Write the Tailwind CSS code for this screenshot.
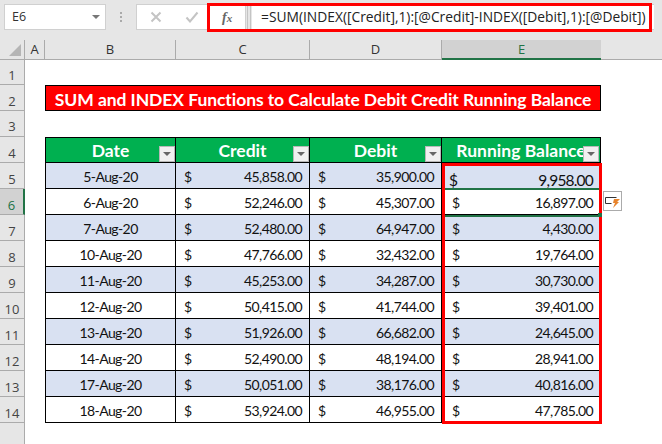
<!DOCTYPE html>
<html lang="en">
<head>
<meta charset="UTF-8">
<title>Running Balance</title>
<script src="https://cdn.jsdelivr.net/npm/@tailwindcss/browser@4"></script>
</head>
<body class="bg-white">
<div class="relative w-[662px] h-[444px] overflow-hidden bg-white font-['Lato',sans-serif] text-[14px] tracking-[-0.6px] text-[#111]">

  <!-- formula bar -->
  <div class="h-[40px] bg-[#e6e6e6] flex items-start pt-[4px] pl-[4px] font-['Open_Sans',sans-serif] tracking-normal">
    <div class="w-[102px] h-[26px] bg-white border border-[#d0d0d0] flex items-center justify-between pl-[7px] pr-[5px] text-[12.5px] text-[#333]">
      E6
      <span class="w-0 h-0 border-x-[4px] border-x-transparent border-t-[4px] border-t-[#777]"></span>
    </div>
    <div class="w-[30px] h-[26px] flex flex-col items-center justify-center gap-[2px]">
      <span class="w-[2px] h-[2px] bg-[#aaa]"></span><span class="w-[2px] h-[2px] bg-[#aaa]"></span><span class="w-[2px] h-[2px] bg-[#aaa]"></span>
    </div>
    <div class="w-[110px] h-[26px] bg-white border border-[#d0d0d0] flex items-center pl-[13px] gap-[23px]">
      <svg width="12" height="12" viewBox="0 0 12 12"><path d="M1.5 1.5l9 9M10.5 1.5l-9 9" stroke="#c4c4c4" stroke-width="2" fill="none"/></svg>
      <svg width="14" height="12" viewBox="0 0 14 12"><path d="M1.5 6.5l3.5 4 7.5-9" stroke="#c4c4c4" stroke-width="2" fill="none"/></svg>
      <span class="font-['Liberation_Serif',serif] italic font-bold text-[14px] text-[#666]">f<span class="text-[11px]">x</span></span>
    </div>
    <div class="w-[4px] h-[26px] ml-[1px] border-x border-[#c4c4c4]"></div>
    <div class="h-[26px] bg-white border-y border-[#d0d0d0] flex-1 flex items-center pl-[9px] text-[13.8px] text-[#222] whitespace-nowrap ml-[1px]">=SUM(INDEX([Credit],1):[@Credit]-INDEX([Debit],1):[@Debit])</div>
    <div class="w-[8px]"></div>
  </div>

  <!-- column headers -->
  <div class="h-[20px] bg-[#e6e6e6] flex border-b border-[#ababab] text-[13px] tracking-normal text-[#333] font-['Open_Sans',sans-serif]">
    <div class="w-[25px] border-r border-[#ababab] flex items-end justify-end pr-[3px] pb-[3px]">
      <span class="w-0 h-0 border-l-[12px] border-l-transparent border-b-[12px] border-b-[#b5b5b5]"></span>
    </div>
    <div class="w-[20px] border-r border-[#ababab] text-center leading-[19px]">A</div>
    <div class="w-[131px] border-r border-[#ababab] text-center leading-[19px]">B</div>
    <div class="w-[134px] border-r border-[#ababab] text-center leading-[19px]">C</div>
    <div class="w-[132px] border-r border-[#ababab] text-center leading-[19px]">D</div>
    <div class="w-[159px] h-[20px] bg-[#d2d2d2] border-b-2 border-[#217346] text-center leading-[19px] text-[#217346]">E</div>
  </div>

  <!-- sheet -->
  <div id="sheet" class="flex flex-col">
    <div class="flex h-[25px]">
      <div class="w-[25px] bg-[#e6e6e6] border-r border-b border-[#ababab] text-[13px] tracking-normal text-[#444] font-['Open_Sans',sans-serif] text-center leading-[30px]">1</div>
    </div>
    <div class="flex h-[26px]">
      <div class="w-[25px] bg-[#e6e6e6] border-r border-b border-[#ababab] text-[13px] tracking-normal text-[#444] font-['Open_Sans',sans-serif] text-center leading-[32px]">2</div>
      <div class="w-[20px]"></div>
      <div class="w-[556px] bg-[#ff0000] border border-black text-white font-bold text-[17.5px] tracking-[-0.07px] text-center leading-[27px] whitespace-nowrap">SUM and INDEX Functions to Calculate Debit Credit Running Balance</div>
    </div>
    <div class="flex h-[26px]">
      <div class="w-[25px] bg-[#e6e6e6] border-r border-b border-[#ababab] text-[13px] tracking-normal text-[#444] font-['Open_Sans',sans-serif] text-center leading-[30px]">3</div>
    </div>
    <div class="flex h-[26px]">
      <div class="w-[25px] bg-[#e6e6e6] border-r border-b border-[#ababab] text-[13px] tracking-normal text-[#444] font-['Open_Sans',sans-serif] text-center leading-[32px]">4</div>
      <div class="w-[20px]"></div>
      <div class="flex h-[26px] border-y border-black bg-[#00b050] text-white font-bold text-[17.5px] tracking-normal leading-[25px]">
        <div class="relative w-[131px] border-x border-black text-center">Date<span class="filter absolute right-0 bottom-0"></span></div>
        <div class="relative w-[134px] border-r border-black text-center">Credit<span class="filter absolute right-0 bottom-0"></span></div>
        <div class="relative w-[132px] border-r border-black text-center">Debit<span class="filter absolute right-0 bottom-0"></span></div>
        <div class="relative w-[159px] border-r border-black text-center whitespace-nowrap">Running Balance<span class="filter absolute right-[1px] bottom-0"></span></div>
      </div>
    </div>
  </div>
  <div class="absolute left-0 top-[423px] w-[25px] h-[21px] bg-[#e6e6e6] border-r border-[#ababab]"></div>

  <!-- selection outline on E5:E14 and formula bar highlight -->
  <div class="absolute left-[442px] top-[163px] w-[160px] h-[261px] border-[3px] border-[#ff0000]"></div>
  <div class="absolute left-[207px] top-[3px] w-[445px] h-[29px] border-[3px] border-[#ff0000]"></div>
  <div class="absolute left-[445px] top-[188px] w-[154px] h-[2px] bg-[#217346]"></div>
  <div class="absolute left-[445px] top-[215px] w-[153px] h-[2px] bg-[#217346]"></div>
  <div class="absolute left-[598px] top-[213px] w-[4px] h-[4px] bg-[#217346]"></div>

  <!-- quick analysis -->
  <div class="absolute left-[603px] top-[191px] w-[19px] h-[20px] bg-white border border-[#ababab]">
    <svg width="17" height="18" viewBox="0 0 17 18">
      <path d="M1.5 5.5h11M1.5 5.5v6h6" stroke="#333" stroke-width="1" fill="none"/>
      <path d="M10 7h6l-3 3h2l-6 6 2-5H9z" fill="#e8842c"/>
    </svg>
  </div>
</div>

<script>
  const data = [
    ['5-Aug-20', '45,858.00', '35,900.00', '9,958.00'],
    ['6-Aug-20', '52,246.00', '45,307.00', '16,897.00'],
    ['7-Aug-20', '52,480.00', '64,947.00', '4,430.00'],
    ['10-Aug-20', '47,766.00', '32,432.00', '19,764.00'],
    ['11-Aug-20', '45,253.00', '34,287.00', '30,730.00'],
    ['12-Aug-20', '50,415.00', '41,744.00', '39,401.00'],
    ['13-Aug-20', '51,926.00', '66,682.00', '24,645.00'],
    ['14-Aug-20', '52,490.00', '48,194.00', '28,941.00'],
    ['17-Aug-20', '50,051.00', '38,176.00', '40,816.00'],
    ['18-Aug-20', '53,924.00', '46,955.00', '47,785.00']
  ];

  // Rows 5 to 14
  const sheet = document.getElementById('sheet');
  data.forEach((r, i) => {
    const selected = i === 1;
    const head = selected
      ? 'bg-[#d2d2d2] text-[#217346] border-r-2 border-r-[#217346]'
      : 'bg-[#e6e6e6] text-[#444] border-r border-r-[#ababab]';
    const fill = i % 2 === 0 ? 'bg-[#d9e1f2]' : 'bg-white';
    const first = i === 0 ? 'text-[15.5px] tracking-[-0.8px] leading-[35px] pl-[7px]' : 'pl-[10px]';
    const row = document.createElement('div');
    row.className = 'flex h-[26px]';
    row.innerHTML = `
      <div class="w-[25px] ${head} border-b border-b-[#ababab] text-[13px] tracking-normal font-['Open_Sans',sans-serif] text-center leading-[32px]">${i + 5}</div>
      <div class="w-[20px]"></div>
      <div class="flex ${fill} border-b border-black leading-[27px]">
        <div class="w-[131px] border-x border-black text-center">${r[0]}</div>
        <div class="w-[134px] border-r border-black flex justify-between pl-[8px] pr-[7px]"><span>$</span><span>${r[1]}</span></div>
        <div class="w-[132px] border-r border-black flex justify-between pl-[8px] pr-[7px]"><span>$</span><span>${r[2]}</span></div>
        <div class="w-[159px] border-r border-black flex justify-between pr-[7px] ${first}"><span>$</span><span>${r[3]}</span></div>
      </div>`;
    sheet.appendChild(row);
  });

  // Filter buttons on the table header
  document.querySelectorAll('.filter').forEach(el => {
    el.classList.add('flex', 'items-center', 'justify-center', 'w-[16px]', 'h-[16px]', 'bg-[#f0f0f0]', 'border', 'border-[#b8b8b8]');
    el.innerHTML = '<span class="w-0 h-0 border-x-[4px] border-x-transparent border-t-[4px] border-t-[#666]"></span>';
  });
</script>
</body>
</html>
